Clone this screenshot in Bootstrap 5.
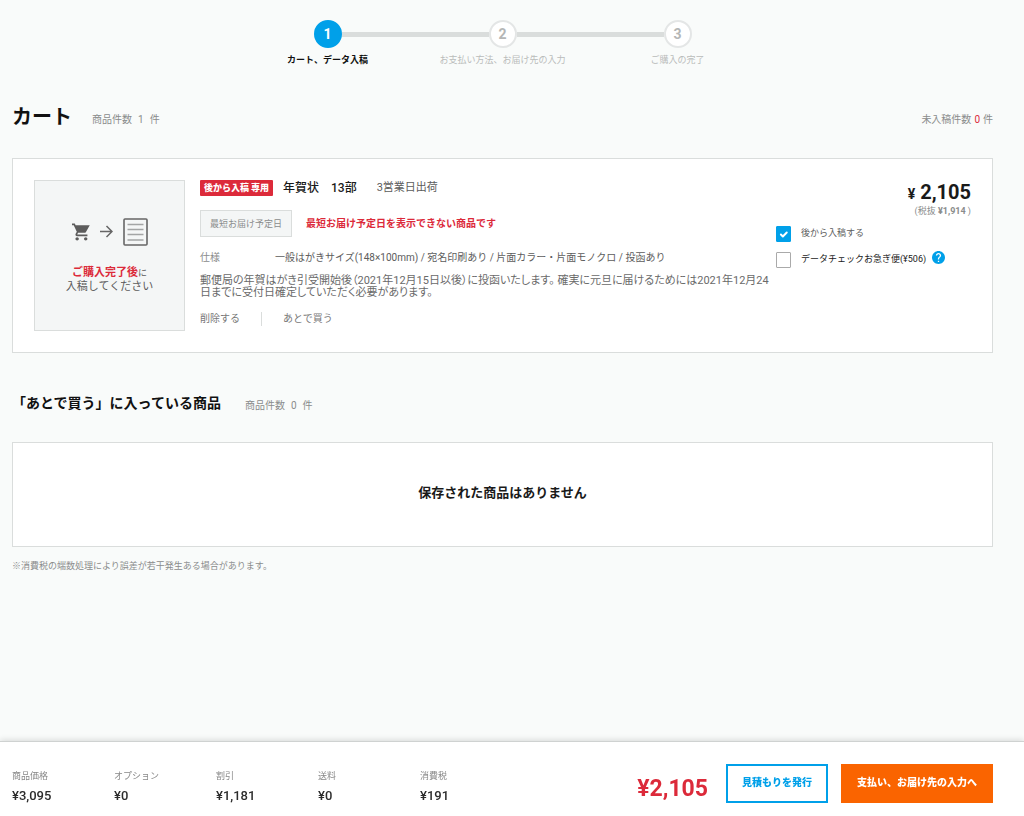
<!DOCTYPE html>
<html lang="ja">
<head>
<meta charset="utf-8">
<meta name="viewport" content="width=device-width, initial-scale=1">
<title>カート</title>
<link rel="stylesheet" href="https://cdn.jsdelivr.net/npm/bootstrap@5.3.0/dist/css/bootstrap.min.css">
<style>
  :root { --ink: #1a1a1a; --sub: #8a8c8c; --line: #dadddc; --sky: #00a0e9; --danger: #dc2a3a; --flame: #fa6400; }
  body { background: #f9fbfa; color: var(--ink); font-family: Roboto, "Noto Sans CJK JP", sans-serif; font-size: 10px; line-height: 12px; }
  .page-wrap { padding: 0 31px 0 12px; }
  .page-main { padding-bottom: 100px; }
  .fs-9 { font-size: 9px; }
  .fs-11 { font-size: 11px; }
  .fs-12 { font-size: 12px; }
  .fs-13 { font-size: 13px; }
  .fw-mid { font-weight: 500; }
  .txt-sub { color: var(--sub); }
  .txt-body { color: #5c5c5c; }
  .txt-danger { color: var(--danger); }

  .steps { max-width: 525px; padding-top: 20px; }
  .step { flex: 1 1 0; color: #b9bbbb; font-size: 9px; text-align: center; white-space: nowrap; }
  .step-track { margin-bottom: 6px; }
  .step-track::before, .step-track::after { content: ""; flex: 1; height: 5px; background: #dadddc; }
  .step:first-child .step-track::before, .step:last-child .step-track::after { background: transparent; }
  .step-dot { width: 28px; height: 28px; border: 2px solid #e4e6e6; border-radius: 50%; background: #fff; font-size: 14px; font-weight: 700; color: #b4b6b6; }
  .step.is-now { color: #111; font-weight: 700; }
  .step.is-now .step-dot { background: var(--sky); border-color: var(--sky); color: #fff; }

  .section-head { margin-top: 39px; margin-bottom: 29px; gap: 20px; }
  .section-head-md { margin-top: 38px; margin-bottom: 27px; gap: 24px; }
  .title-lg { font-size: 20px; line-height: 24px; font-weight: 700; margin: 0; color: #111; }
  .title-md { font-size: 14px; line-height: 24px; font-weight: 700; margin: 0; color: #111; }
  .count { gap: 6px; padding-top: 6px; }
  .count-end { gap: 3px; }
  .panel { background: #fff; border: 1px solid var(--line); }
  .item-panel { padding: 21px; }
  .thumb { width: 151px; height: 151px; background: #f4f6f6; border: 1px solid var(--line); flex: none; line-height: 14px; margin-right: 15px; }
  .thumb-icons { gap: 10px; height: 28px; margin-bottom: 20px; }
  .tag { background: var(--danger); color: #fff; font-size: 9px; font-weight: 900; line-height: 16px; width: 73px; text-align: center; border-radius: 1px; }
  .date-row { margin-top: 14px; gap: 14px; }
  .date-box { width: 92px; height: 27px; border: 1px solid var(--line); background: #f4f6f6; }
  .spec { margin: 15px 0 11px; }
  .spec-label { width: 75px; flex: none; }
  .desc { font-size: 11px; color: #6a6a6a; font-feature-settings: "palt"; margin-bottom: 13px; }
  .item-side { width: 195px; flex: none; }
  .act + .act { border-left: 1px solid var(--line); margin-left: 21px; padding-left: 21px; }
  .text-button { background: none; border: 0; padding: 0; color: #777; line-height: 14px; }
  .price { font-size: 20px; line-height: 24px; font-weight: 700; }
  .yen { font-size: 14px; }
  .price-net { font-size: 9px; line-height: 10px; }
  .opt { gap: 10px; height: 16px; margin-top: 10px; font-size: 9px; }
  .opt label { padding-bottom: 3px; }
  .opt .form-check-input { width: 15px; height: 16px; margin: 0; border: 1px solid #aaa; border-radius: 1px; }
  .opt .form-check-input:checked { background-color: var(--sky); border-color: var(--sky); }
  .help { border: 0; padding: 0 0 5px; background: none; line-height: 0; margin-left: -4px; }

  .empty { height: 105px; padding-bottom: 4px; margin-bottom: 13px; }
  .pay-bar { background: #fff; border-top: 1px solid #cfd2d1; box-shadow: 0 -1px 6px rgba(0, 0, 0, .14); height: 75px; }
  .sums { padding-top: 14px; }
  .sum { width: 102px; line-height: 19px; }
  .sum dt { font-size: 9px; font-weight: 400; color: #888; }
  .sum dd { font-size: 13px; font-weight: 500; margin: 0; color: #2c2c2c; }
  .total { font-size: 23px; line-height: 28px; font-weight: 700; color: var(--danger); margin-right: 18px; padding-top: 12px; }
  .bar-btn { height: 39px; font-size: 10px; font-weight: 900; line-height: 12px; border-width: 2px; border-radius: 0; padding: 0; white-space: nowrap; }
  .bar-btn-line { width: 102px; color: var(--sky); background: #fff; border-color: var(--sky); }
  .bar-btn-fill { width: 152px; color: #fff; background: var(--flame); border-color: var(--flame); margin-left: 13px; }
</style>
</head>
<body>
<main class="page-wrap page-main">
  <ol class="steps list-unstyled d-flex mx-auto mb-0">
    <li class="step is-now" aria-current="step">
      <div class="step-track d-flex align-items-center"><span class="step-dot d-flex align-items-center justify-content-center">1</span></div>
      <div>カート、データ入稿</div>
    </li>
    <li class="step">
      <div class="step-track d-flex align-items-center"><span class="step-dot d-flex align-items-center justify-content-center">2</span></div>
      <div>お支払い方法、お届け先の入力</div>
    </li>
    <li class="step">
      <div class="step-track d-flex align-items-center"><span class="step-dot d-flex align-items-center justify-content-center">3</span></div>
      <div>ご購入の完了</div>
    </li>
  </ol>

  <header class="section-head d-flex align-items-center">
    <h1 class="title-lg">カート</h1>
    <div class="count d-flex txt-sub"><span>商品件数</span><span>1</span><span>件</span></div>
    <div class="count count-end d-flex txt-sub ms-auto"><span>未入稿件数</span><span class="txt-danger">0</span><span>件</span></div>
  </header>

  <section class="panel item-panel d-flex">
    <div class="thumb d-flex flex-column align-items-center justify-content-center">
      <div class="thumb-icons d-flex align-items-center">
        <svg width="18" height="18" viewBox="1 2 21 20" fill="#5c5c5c" aria-hidden="true"><path d="M7 18c-1.100 0-1.990.9-1.990 2S5.900 22 7 22s2-.9 2-2-.9-2-2-2zM1 2v2h2l3.600 7.590-1.350 2.450C4.520 15.370 5.480 17 7 17h12v-2H7.420c-.14 0-.25-.11-.25-.25l.9-1.750h7.450c.75 0 1.410-.41 1.750-1.030L21.700 4H5.210l-.94-2H1zm16 16c-1.100 0-1.990.9-1.990 2s.89 2 1.990 2 2-.9 2-2-.9-2-2-2z"/></svg>
        <svg width="13" height="13" viewBox="0 0 13 13" fill="none" stroke="#666" stroke-width="1.500" aria-hidden="true"><path d="M0 6.500h12M6.500 1l5.500 5.500L6.500 12"/></svg>
        <svg width="25" height="28" viewBox="0 0 25 28" fill="none" aria-hidden="true"><rect x="1" y="1" width="23" height="26" rx="1" stroke="#666" stroke-width="1.600"/><path d="M4.500 6.500h16M4.500 11.500h16M4.500 16.500h16M4.500 22h16" stroke="#a3a5a5" stroke-width="1.500"/></svg>
      </div>
      <div><span class="txt-danger fs-11 fw-bold">ご購入完了後</span><span class="txt-body fs-9">に</span></div>
      <div class="txt-body fs-11">入稿してください</div>
    </div>

    <div class="flex-grow-1">
      <div class="d-flex align-items-center">
        <span class="tag">後から入稿 専用</span>
        <strong class="fs-12 fw-mid" style="margin-left:10px">年賀状</strong>
        <strong class="fs-12 fw-mid" style="margin-left:12px">13部</strong>
        <span class="fs-11 txt-body" style="margin-left:20px">3営業日出荷</span>
      </div>
      <div class="date-row d-flex align-items-center">
        <span class="date-box d-flex align-items-center justify-content-center fs-9 txt-sub">最短お届け予定日</span>
        <strong class="txt-danger">最短お届け予定日を表示できない商品です</strong>
      </div>
      <dl class="spec d-flex">
        <dt class="spec-label txt-sub fw-normal">仕様</dt>
        <dd class="txt-body mb-0">一般はがきサイズ(148×100mm) / 宛名印刷あり / 片面カラー・片面モノクロ / 投函あり</dd>
      </dl>
      <p class="desc">郵便局の年賀はがき引受開始後（2021年12月15日以後）に投函いたします。 確実に元旦に届けるためには2021年12月24日までに受付日確定していただく必要があります。</p>
      <div class="d-flex">
        <div class="act"><button type="button" class="text-button">削除する</button></div>
        <div class="act"><button type="button" class="text-button">あとで買う</button></div>
      </div>
    </div>

    <div class="item-side">
      <div class="price text-end"><span class="yen">¥</span> 2,105</div>
      <div class="price-net txt-sub text-end">(税抜 <b>¥1,914</b> )</div>
      <div class="opt d-flex align-items-center">
        <input class="form-check-input" type="checkbox" id="later" checked>
        <label class="txt-body" for="later">後から入稿する</label>
      </div>
      <div class="opt d-flex align-items-center">
        <input class="form-check-input" type="checkbox" id="rush">
        <label for="rush" class="text-nowrap">データチェックお急ぎ便(¥506)</label>
        <button type="button" class="help" aria-label="ヘルプ"><svg width="13" height="13" viewBox="2 2 20 20" aria-hidden="true"><circle cx="12" cy="12" r="9" fill="#fff"/><path fill="#00a0e9" d="M12 2C6.480 2 2 6.480 2 12s4.480 10 10 10 10-4.480 10-10S17.520 2 12 2zm1 17h-2v-2h2v2zm2.070-7.750-.9.920C13.450 12.900 13 13.500 13 15h-2v-.5c0-1.100.45-2.100 1.170-2.830l1.240-1.260c.37-.36.59-.86.59-1.410 0-1.100-.9-2-2-2s-2 .9-2 2H8c0-2.210 1.790-4 4-4s4 1.790 4 4c0 .88-.36 1.680-.93 2.250z"/></svg></button>
      </div>
    </div>
  </section>

  <header class="section-head-md d-flex align-items-center">
    <h2 class="title-md">「あとで買う」に入っている商品</h2>
    <div class="count d-flex txt-sub"><span>商品件数</span><span>0</span><span>件</span></div>
  </header>
  <section class="panel empty d-flex align-items-center justify-content-center">
    <strong class="fs-13">保存された商品はありません</strong>
  </section>
  <p class="fs-9 txt-sub mb-0">※消費税の端数処理により誤差が若干発生ある場合があります。</p>
</main>

<footer class="pay-bar page-wrap fixed-bottom d-flex align-items-center">
  <dl class="sums d-flex mb-0 flex-shrink-0">
    <div class="sum"><dt>商品価格</dt><dd>¥3,095</dd></div>
    <div class="sum"><dt>オプション</dt><dd>¥0</dd></div>
    <div class="sum"><dt>割引</dt><dd>¥1,181</dd></div>
    <div class="sum"><dt>送料</dt><dd>¥0</dd></div>
    <div class="sum"><dt>消費税</dt><dd>¥191</dd></div>
  </dl>
  <div class="d-flex align-items-center ms-auto pt-2">
    <strong class="total">¥2,105</strong>
    <button type="button" class="btn bar-btn bar-btn-line">見積もりを発行</button>
    <button type="button" class="btn bar-btn bar-btn-fill">支払い、お届け先の入力へ</button>
  </div>
</footer>
<script src="https://cdn.jsdelivr.net/npm/bootstrap@5.3.0/dist/js/bootstrap.bundle.min.js"></script>
</body>
</html>
